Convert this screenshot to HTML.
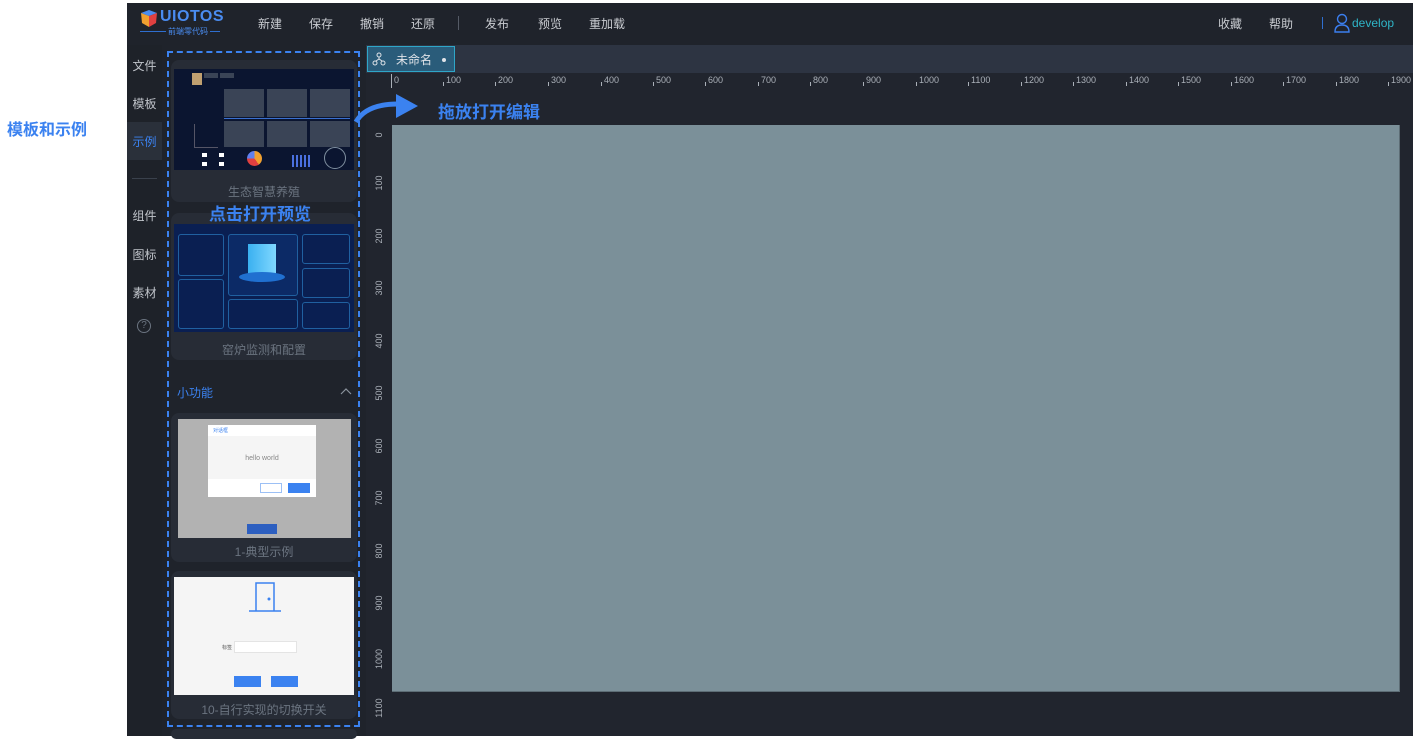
<!DOCTYPE html>
<html><head><meta charset="utf-8"><style>
*{margin:0;padding:0;box-sizing:border-box}
body{width:1413px;height:746px;background:#fff;position:relative;overflow:hidden;font-family:"Liberation Sans","Noto Sans CJK SC",sans-serif;}
.a{position:absolute}
.top{left:127px;top:3px;width:1286px;height:42px;background:#1f232b}
.menu{color:#c9ccd1;font-size:12px;top:15px}
.nav{left:127px;top:45px;width:35px;height:691px;background:#1e2229}
.nav div{position:absolute;left:0;width:35px;text-align:center;color:#c0c4ca;font-size:12px}
.panel{left:162px;top:45px;width:204px;height:691px;background:#1f232b}
.card{background:#272c36;border-radius:8px;position:absolute;left:171px;width:186px}
.cap{position:absolute;width:100%;text-align:center;color:#6b7480;font-size:12px}
.tabbar{left:366px;top:45px;width:1047px;height:28px;background:#2d3442}
.work{left:366px;top:73px;width:1047px;height:663px;background:#21252e}
.hr{position:absolute;top:75px;color:#aab0b8;font-size:9px}
.hr:before{content:"";position:absolute;left:-3px;top:7px;width:1px;height:4px;background:#aab0b8}
.vr{position:absolute;left:364px;color:#aab0b8;font-size:9px;transform:rotate(-90deg);transform-origin:center;width:30px;text-align:center}
.g{position:absolute;background:#5a6470;opacity:.6}
</style></head><body>
<div class="a top"></div>
<svg class="a" style="left:139px;top:9px" width="20" height="20" viewBox="0 0 20 20"><path d="M2 4 L10 1 L18 4 L10 7Z" fill="#4a8cf0"/><path d="M2 4 L10 7 L10 18 L3 14Z" fill="#f0a030"/><path d="M10 7 L18 4 L17 14 L10 18Z" fill="#e04040"/></svg>
<div class="a" style="left:160px;top:8px;color:#4a8cf0;font-size:16px;font-weight:bold;letter-spacing:0.5px">UIOTOS</div>
<div class="a" style="left:140px;top:31px;width:80px;height:1px;background:#2f6fd0"></div>
<div class="a" style="left:166px;top:26px;color:#4a8cf0;font-size:8px;background:#1f232b;padding:0 2px">前端零代码</div>
<div class="a menu" style="left:258px">新建</div>
<div class="a menu" style="left:309px">保存</div>
<div class="a menu" style="left:360px">撤销</div>
<div class="a menu" style="left:411px">还原</div>
<div class="a" style="left:458px;top:16px;width:1px;height:14px;background:#555b66"></div>
<div class="a menu" style="left:485px">发布</div>
<div class="a menu" style="left:538px">预览</div>
<div class="a menu" style="left:589px">重加载</div>
<div class="a menu" style="left:1218px">收藏</div>
<div class="a menu" style="left:1269px">帮助</div>
<div class="a" style="left:1322px;top:17px;width:1px;height:12px;background:#2f6fd0"></div>
<svg class="a" style="left:1333px;top:13px" width="18" height="20" viewBox="0 0 18 20"><circle cx="9" cy="6" r="4.5" fill="none" stroke="#3b7ff0" stroke-width="1.4"/><path d="M2 19 Q2 12 9 12 Q16 12 16 19 Z" fill="none" stroke="#3b7ff0" stroke-width="1.4"/></svg>
<div class="a" style="left:1352px;top:16px;color:#2fb5c8;font-size:12px">develop</div>

<div class="a nav">
<div style="top:12px">文件</div>
<div style="top:50px">模板</div>
<div style="top:77px;height:38px;background:#2a303a"></div>
<div style="top:88px;color:#3b82f0">示例</div>
<div style="top:133px;left:5px;width:25px;height:1px;background:#3a414c"></div>
<div style="top:162px">组件</div>
<div style="top:201px">图标</div>
<div style="top:239px">素材</div>
<div style="top:274px;left:10px;width:14px;height:14px;border:1px solid #6b7480;border-radius:50%;font-size:10px;line-height:12px;color:#6b7480">?</div>
</div>
<div class="a panel"></div>

<div class="card" style="top:60px;height:142px">
 <div class="a" style="left:3px;top:9px;width:180px;height:101px;background:#0b1530">
  <div class="a" style="left:18px;top:4px;width:10px;height:12px;background:#c0a070"></div>
  <div class="g" style="left:30px;top:4px;width:14px;height:5px"></div>
  <div class="g" style="left:46px;top:4px;width:14px;height:5px"></div>
  <div class="g" style="left:50px;top:20px;width:40px;height:28px"></div>
  <div class="g" style="left:93px;top:20px;width:40px;height:28px"></div>
  <div class="g" style="left:136px;top:20px;width:40px;height:28px"></div>
  <div class="g" style="left:50px;top:52px;width:40px;height:26px"></div>
  <div class="g" style="left:93px;top:52px;width:40px;height:26px"></div>
  <div class="g" style="left:136px;top:52px;width:40px;height:26px"></div>
  <div class="a" style="left:50px;top:49px;width:126px;height:1px;background:#3a70d0"></div>
  <div class="a" style="left:20px;top:55px;width:24px;height:24px;border-left:1px solid #556;border-bottom:1px solid #556"></div>
  <div class="a" style="left:73px;top:82px;width:15px;height:15px;border-radius:50%;background:conic-gradient(#f0a030 0 40%,#e04040 0 75%,#6080f0 0)"></div>
  <div class="a" style="left:118px;top:86px;width:20px;height:12px;background:repeating-linear-gradient(90deg,#4a70e0 0 2px,transparent 2px 4px)"></div>
  <div class="a" style="left:150px;top:78px;width:22px;height:22px;border-radius:50%;border:1px solid #8090a0"></div>
  <div class="a" style="left:28px;top:84px;width:5px;height:4px;background:#fff"></div>
  <div class="a" style="left:45px;top:84px;width:5px;height:4px;background:#fff"></div>
  <div class="a" style="left:28px;top:93px;width:5px;height:4px;background:#fff"></div>
  <div class="a" style="left:45px;top:93px;width:5px;height:4px;background:#fff"></div>
 </div>
 <div class="cap" style="top:123px">生态智慧养殖</div>
</div>
<div class="card" style="top:213px;height:147px">
 <div class="a" style="left:3px;top:11px;width:180px;height:108px;background:#0a1f52">
  <div class="a" style="left:4px;top:10px;width:46px;height:42px;border:1px solid #2060a0;border-radius:3px"></div>
  <div class="a" style="left:4px;top:55px;width:46px;height:50px;border:1px solid #2060a0;border-radius:3px"></div>
  <div class="a" style="left:54px;top:10px;width:70px;height:62px;border:1px solid #2060a0;border-radius:3px;background:#0c2a66"></div>
  <div class="a" style="left:74px;top:20px;width:28px;height:30px;background:linear-gradient(90deg,#3ab0f0,#80d8ff)"></div>
  <div class="a" style="left:65px;top:48px;width:46px;height:10px;border-radius:50%;background:#2070d0"></div>
  <div class="a" style="left:54px;top:75px;width:70px;height:30px;border:1px solid #2060a0;border-radius:3px"></div>
  <div class="a" style="left:128px;top:10px;width:48px;height:30px;border:1px solid #2060a0;border-radius:3px"></div>
  <div class="a" style="left:128px;top:44px;width:48px;height:30px;border:1px solid #2060a0;border-radius:3px"></div>
  <div class="a" style="left:128px;top:78px;width:48px;height:27px;border:1px solid #2060a0;border-radius:3px"></div>
 </div>
 <div class="cap" style="top:128px">窑炉监测和配置</div>
</div>
<div class="a" style="left:209px;top:200px;color:#3b82f0;font-size:17px;font-weight:bold">点击打开预览</div>
<div class="a" style="left:177px;top:384px;color:#3b82f0;font-size:12px">小功能</div>
<svg class="a" style="left:340px;top:387px" width="12" height="8"><path d="M1 7 L6 2 L11 7" fill="none" stroke="#8a929c" stroke-width="1.2"/></svg>
<div class="card" style="top:413px;height:149px">
 <div class="a" style="left:7px;top:6px;width:173px;height:119px;background:#b2b2b2">
  <div class="a" style="left:30px;top:6px;width:108px;height:72px;background:#f5f5f5;border-radius:2px">
   <div class="a" style="left:0;top:0;width:108px;height:11px;background:#fff"></div>
   <div class="a" style="left:5px;top:2px;font-size:5px;color:#3b82f0">对话框</div>
   <div class="a" style="left:0;top:30px;width:108px;text-align:center;font-size:7px;color:#888">hello world</div>
   <div class="a" style="left:0;top:54px;width:108px;height:18px;background:#fff"></div>
   <div class="a" style="left:52px;top:58px;width:22px;height:10px;border:1px solid #9cc0f5;background:#fff"></div>
   <div class="a" style="left:80px;top:58px;width:22px;height:10px;background:#3b82f0"></div>
  </div>
  <div class="a" style="left:69px;top:105px;width:30px;height:10px;background:#2d5fc0"></div>
 </div>
 <div class="cap" style="top:130px">1-典型示例</div>
</div>
<div class="card" style="top:571px;height:148px">
 <div class="a" style="left:3px;top:6px;width:180px;height:118px;background:#f5f5f5">
  <svg class="a" style="left:74px;top:4px" width="34" height="32"><path d="M8 30 V2 H26 V30" fill="none" stroke="#3b82f0" stroke-width="1.5"/><path d="M1 30 H33" stroke="#3b82f0" stroke-width="1.5"/><circle cx="21" cy="18" r="1.5" fill="#3b82f0"/></svg>
  <div class="a" style="left:48px;top:67px;font-size:5px;color:#555">标签</div>
  <div class="a" style="left:60px;top:64px;width:63px;height:12px;background:#fff;border:1px solid #e4e4e4"></div>
  <div class="a" style="left:60px;top:99px;width:27px;height:11px;background:#3b82f0"></div>
  <div class="a" style="left:97px;top:99px;width:27px;height:11px;background:#3b82f0"></div>
 </div>
 <div class="cap" style="top:130px">10-自行实现的切换开关</div>
</div>
<div class="card" style="top:729px;height:10px"></div>
<div class="a" style="left:167px;top:51px;width:193px;height:676px;border:2px dashed #3b82f0"></div>

<div class="a tabbar"></div>
<div class="a" style="left:367px;top:46px;width:88px;height:26px;background:#2a5c7a;border:1px solid #2fa6c8"></div>
<svg class="a" style="left:372px;top:52px" width="14" height="14" viewBox="0 0 14 14"><circle cx="7" cy="3" r="2" fill="none" stroke="#dfe3e8"/><circle cx="3" cy="11" r="2" fill="none" stroke="#dfe3e8"/><circle cx="11" cy="11" r="2" fill="none" stroke="#dfe3e8"/><path d="M7 5 V7 M4 9 L7 7 L10 9" stroke="#dfe3e8" fill="none"/></svg>
<div class="a" style="left:396px;top:51px;color:#dfe3e8;font-size:12px">未命名</div>
<div class="a" style="left:442px;top:58px;width:4px;height:4px;border-radius:50%;background:#dfe3e8"></div>
<div class="a work"></div>
<div class="a" style="left:391px;top:74px;width:1px;height:14px;background:#aab0b8"></div>
<div class="hr" style="left:394px">0</div><div class="hr" style="left:446px">100</div><div class="hr" style="left:498px">200</div><div class="hr" style="left:551px">300</div><div class="hr" style="left:604px">400</div><div class="hr" style="left:656px">500</div><div class="hr" style="left:708px">600</div><div class="hr" style="left:761px">700</div><div class="hr" style="left:813px">800</div><div class="hr" style="left:866px">900</div><div class="hr" style="left:919px">1000</div><div class="hr" style="left:971px">1100</div><div class="hr" style="left:1024px">1200</div><div class="hr" style="left:1076px">1300</div><div class="hr" style="left:1129px">1400</div><div class="hr" style="left:1181px">1500</div><div class="hr" style="left:1234px">1600</div><div class="hr" style="left:1286px">1700</div><div class="hr" style="left:1339px">1800</div><div class="hr" style="left:1391px">1900</div>
<div class="vr" style="top:130px">0</div><div class="vr" style="top:178px">100</div><div class="vr" style="top:231px">200</div><div class="vr" style="top:283px">300</div><div class="vr" style="top:336px">400</div><div class="vr" style="top:388px">500</div><div class="vr" style="top:441px">600</div><div class="vr" style="top:493px">700</div><div class="vr" style="top:546px">800</div><div class="vr" style="top:598px">900</div><div class="vr" style="top:654px">1000</div><div class="vr" style="top:703px">1100</div>
<div class="a" style="left:392px;top:125px;width:1008px;height:567px;background:#7b9099;border-bottom:1px solid #5d6d75;border-right:1px solid #5d6d75"></div>
<svg class="a" style="left:352px;top:92px" width="80" height="34"><path d="M4 30 Q14 12 46 12" fill="none" stroke="#3b82f0" stroke-width="5"/><path d="M44 2 L66 14 L44 26Z" fill="#3b82f0"/></svg>
<div class="a" style="left:438px;top:98px;color:#3b82f0;font-size:17px;font-weight:bold">拖放打开编辑</div>
<div class="a" style="left:7px;top:116px;color:#3b82f0;font-size:16px;font-weight:bold">模板和示例</div>
</body></html>
